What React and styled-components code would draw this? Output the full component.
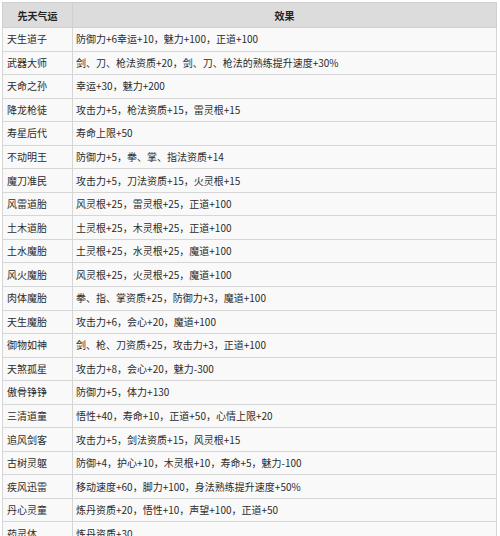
import React from "react";
import styled, { createGlobalStyle } from "styled-components";

const GlobalStyle = createGlobalStyle`
  html, body {
    margin: 0;
    padding: 0;
    background: #ffffff;
  }
  body {
    font-family: "Noto Sans CJK SC", "Noto Sans", sans-serif;
  }
`;

const rows = [
  ["天生道子", "防御力+6幸运+10，魅力+100，正道+100"],
  ["武器大师", "剑、刀、枪法资质+20，剑、刀、枪法的熟练提升速度+30%"],
  ["天命之孙", "幸运+30，魅力+200"],
  ["降龙枪徒", "攻击力+5，枪法资质+15，雷灵根+15"],
  ["寿星后代", "寿命上限+50"],
  ["不动明王", "防御力+5，拳、掌、指法资质+14"],
  ["魔刀准民", "攻击力+5，刀法资质+15，火灵根+15"],
  ["风雷道胎", "风灵根+25，雷灵根+25，正道+100"],
  ["土木道胎", "土灵根+25，木灵根+25，正道+100"],
  ["土水魔胎", "土灵根+25，水灵根+25，魔道+100"],
  ["风火魔胎", "风灵根+25，火灵根+25，魔道+100"],
  ["肉体魔胎", "拳、指、掌资质+25，防御力+3，魔道+100"],
  ["天生魔胎", "攻击力+6，会心+20，魔道+100"],
  ["御物如神", "剑、枪、刀资质+25，攻击力+3，正道+100"],
  ["天煞孤星", "攻击力+8，会心+20，魅力-300"],
  ["傲骨铮铮", "防御力+5，体力+130"],
  ["三清道童", "悟性+40，寿命+10，正道+50，心情上限+20"],
  ["追风剑客", "攻击力+5，剑法资质+15，风灵根+15"],
  ["古树灵躯", "防御+4，护心+10，木灵根+10，寿命+5，魅力-100"],
  ["疾风迅雷", "移动速度+60，脚力+100，身法熟练提升速度+50%"],
  ["丹心灵童", "炼丹资质+20，悟性+10，声望+100，正道+50"],
  ["药灵体", "炼丹资质+30"],
];

const Page = styled.div`
  padding: 2px 3px 0 2px;
`;

const Table = styled.table`
  width: 495px;
  border-collapse: collapse;
  table-layout: fixed;
  background: #f9f9f9;
  font-size: 10px;
  color: #2b2b2b;
`;

const HeadCell = styled.th`
  box-sizing: border-box;
  height: 25px;
  padding: 0 4px;
  background: #dcdcdc;
  border: 1px solid #cfcfcf;
  font-weight: bold;
  text-align: center;
  color: #222;
  width: ${(p) => (p.$narrow ? "70px" : "auto")};
`;

const Cell = styled.td`
  box-sizing: border-box;
  height: 23.55px;
  padding: 0 ${(p) => (p.$first ? "4px" : "3px")};
  border: 1px solid #d6d6d6;
  white-space: nowrap;
  overflow: hidden;
  line-height: 1;
`;

export default function App() {
  return (
    <Page>
      <GlobalStyle />
      <Table>
        <thead>
          <tr>
            <HeadCell $narrow>先天气运</HeadCell>
            <HeadCell>效果</HeadCell>
          </tr>
        </thead>
        <tbody>
          {rows.map(([name, effect]) => (
            <tr key={name}>
              <Cell $first>{name}</Cell>
              <Cell>{effect}</Cell>
            </tr>
          ))}
        </tbody>
      </Table>
    </Page>
  );
}
